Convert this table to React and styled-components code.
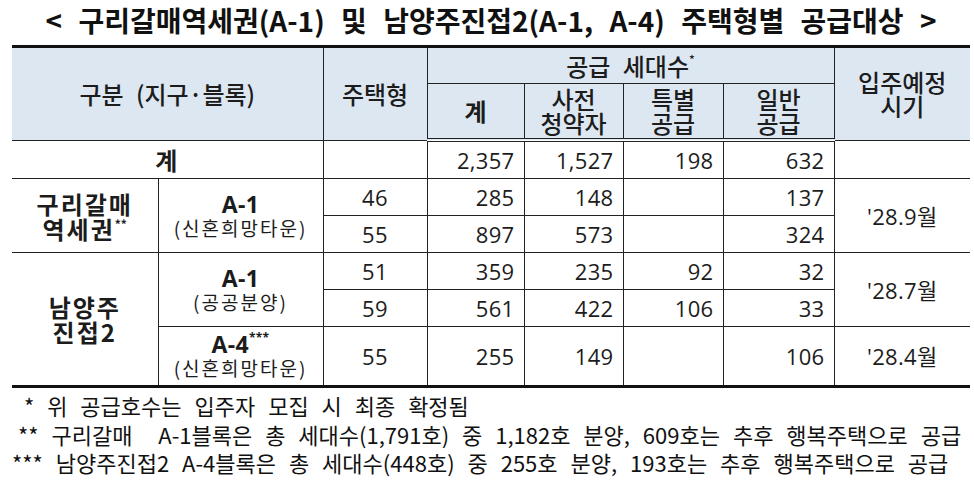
import React from "react";
import styled, { createGlobalStyle } from "styled-components";

const GlobalStyle = createGlobalStyle`
  html, body {
    margin: 0;
    padding: 0;
    background: #fff;
  }
  body {
    font-family: "Noto Sans CJK KR", sans-serif;
    color: #1c1c1c;
  }
`;

const Page = styled.div`
  width: 974px;
  height: 483px;
  padding: 0 4px 0 12px;
  box-sizing: border-box;
  overflow: hidden;
`;

const Title = styled.h1`
  margin: 0;
  height: 44px;
  padding-bottom: 4px;
  box-sizing: border-box;
  display: flex;
  align-items: center;
  justify-content: center;
  font-size: 28px;
  font-weight: 700;
  color: #111;
  word-spacing: 10px;
  span {
    display: inline-block;
    white-space: nowrap;
  }
`;

const Table = styled.table`
  width: 958px;
  border-collapse: collapse;
  table-layout: fixed;
  border-top: 3px solid #111;
  border-bottom: 3px solid #111;
  margin-top: 1px;
`;

const HeadCell = styled.th`
  background: #dde7f2;
  font-weight: ${(p) => (p.$bold ? 700 : 500)};
  font-size: 24px;
  line-height: 24px;
  text-align: center;
  vertical-align: middle;
  border: 1px solid #222;
  padding: 0;
  word-spacing: 7px;
  height: ${(p) => p.$h || 36}px;
  &:first-child {
    border-left: none;
  }
  &:last-child {
    border-right: none;
  }
  sup {
    font-size: 12px;
    line-height: 0;
    vertical-align: 12px;
  }
`;

const HeadRow = styled.tr`
  &:last-child th {
    border-bottom: 4px double #222;
  }
`;

const Cell = styled.td`
  font-family: "Open Sans", "Noto Sans CJK KR", sans-serif;
  font-size: 22px;
  letter-spacing: 0.3px;
  font-weight: ${(p) => (p.$bold ? 700 : 400)};
  text-align: ${(p) => p.$align || "right"};
  padding: 0 ${(p) => (p.$align === "center" ? 0 : 9)}px 0 0;
  border: 1px solid #222;
  height: ${(p) => p.$h || 36}px;
  vertical-align: middle;
  line-height: 24px;
  &:first-child {
    border-left: none;
  }
  &:last-child {
    border-right: none;
  }
`;

const GroupName = styled.div`
  font-family: "Noto Sans CJK KR", sans-serif;
  font-weight: 700;
  font-size: 24px;
  line-height: 25px;
  letter-spacing: 2px;
  sup {
    font-size: 12px;
    line-height: 0;
    vertical-align: 10px;
    letter-spacing: 0;
  }
`;

const BlockCode = styled.div`
  font-family: "Open Sans", sans-serif;
  font-weight: 700;
  font-size: 23px;
  line-height: 23px;
  sup {
    font-size: 12px;
    line-height: 0;
    vertical-align: 11px;
  }
`;

const BlockType = styled.div`
  font-family: "Noto Sans CJK KR", sans-serif;
  font-size: 19px;
  line-height: 23px;
  letter-spacing: 2px;
`;

const Notes = styled.div`
  margin-top: 3px;
  font-size: 22px;
  line-height: 28.5px;
  color: #111;
  word-spacing: 8px;
`;

const Note = styled.div`
  padding-left: ${(p) => p.$indent}px;
  white-space: nowrap;
`;

function Block({ code, mark, type }) {
  return (
    <>
      <BlockCode>
        {code}
        {mark && <sup>{mark}</sup>}
      </BlockCode>
      <BlockType>{type}</BlockType>
    </>
  );
}

export default function App() {
  return (
    <Page>
      <GlobalStyle />
      <Title>
        <span>&lt; 구리갈매역세권(A-1) 및 남양주진접2(A-1, A-4) 주택형별 공급대상 &gt;</span>
      </Title>
      <Table>
        <colgroup>
          <col style={{ width: 146 }} />
          <col style={{ width: 165 }} />
          <col style={{ width: 104 }} />
          <col style={{ width: 97 }} />
          <col style={{ width: 99 }} />
          <col style={{ width: 100 }} />
          <col style={{ width: 111 }} />
          <col style={{ width: 136 }} />
        </colgroup>
        <thead>
          <HeadRow>
            <HeadCell colSpan={2} rowSpan={2}>
              구분 (지구·블록)
            </HeadCell>
            <HeadCell rowSpan={2}>주택형</HeadCell>
            <HeadCell colSpan={4} $h={35}>
              공급 세대수<sup>*</sup>
            </HeadCell>
            <HeadCell rowSpan={2}>
              입주예정
              <br />
              시기
            </HeadCell>
          </HeadRow>
          <HeadRow>
            <HeadCell $bold $h={54}>
              계
            </HeadCell>
            <HeadCell $h={54}>
              사전
              <br />
              청약자
            </HeadCell>
            <HeadCell $h={54}>
              특별
              <br />
              공급
            </HeadCell>
            <HeadCell $h={54}>
              일반
              <br />
              공급
            </HeadCell>
          </HeadRow>
        </thead>
        <tbody>
          <tr>
            <Cell colSpan={2} $align="center">
              <GroupName>계</GroupName>
            </Cell>
            <Cell />
            <Cell>2,357</Cell>
            <Cell>1,527</Cell>
            <Cell>198</Cell>
            <Cell>632</Cell>
            <Cell />
          </tr>
          <tr>
            <Cell rowSpan={2} $align="center">
              <GroupName>
                구리갈매
                <br />
                역세권<sup>**</sup>
              </GroupName>
            </Cell>
            <Cell rowSpan={2} $align="center">
              <Block code="A-1" type="(신혼희망타운)" />
            </Cell>
            <Cell $align="center">46</Cell>
            <Cell>285</Cell>
            <Cell>148</Cell>
            <Cell />
            <Cell>137</Cell>
            <Cell rowSpan={2} $align="center">
              '28.9월
            </Cell>
          </tr>
          <tr>
            <Cell $align="center">55</Cell>
            <Cell>897</Cell>
            <Cell>573</Cell>
            <Cell />
            <Cell>324</Cell>
          </tr>
          <tr>
            <Cell rowSpan={3} $align="center">
              <GroupName>
                남양주
                <br />
                진접2
              </GroupName>
            </Cell>
            <Cell rowSpan={2} $align="center">
              <Block code="A-1" type="(공공분양)" />
            </Cell>
            <Cell $align="center">51</Cell>
            <Cell>359</Cell>
            <Cell>235</Cell>
            <Cell>92</Cell>
            <Cell>32</Cell>
            <Cell rowSpan={2} $align="center">
              '28.7월
            </Cell>
          </tr>
          <tr>
            <Cell $align="center">59</Cell>
            <Cell>561</Cell>
            <Cell>422</Cell>
            <Cell>106</Cell>
            <Cell>33</Cell>
          </tr>
          <tr>
            <Cell $align="center" $h={58}>
              <Block code="A-4" mark="***" type="(신혼희망타운)" />
            </Cell>
            <Cell $align="center">55</Cell>
            <Cell>255</Cell>
            <Cell>149</Cell>
            <Cell />
            <Cell>106</Cell>
            <Cell $align="center">'28.4월</Cell>
          </tr>
        </tbody>
      </Table>
      <Notes>
        <Note $indent={12}>* 위 공급호수는 입주자 모집 시 최종 확정됨</Note>
        <Note $indent={6}>** 구리갈매 &nbsp;A-1블록은 총 세대수(1,791호) 중 1,182호 분양, 609호는 추후 행복주택으로 공급</Note>
        <Note $indent={0}>*** 남양주진접2 A-4블록은 총 세대수(448호) 중 255호 분양, 193호는 추후 행복주택으로 공급</Note>
      </Notes>
    </Page>
  );
}
